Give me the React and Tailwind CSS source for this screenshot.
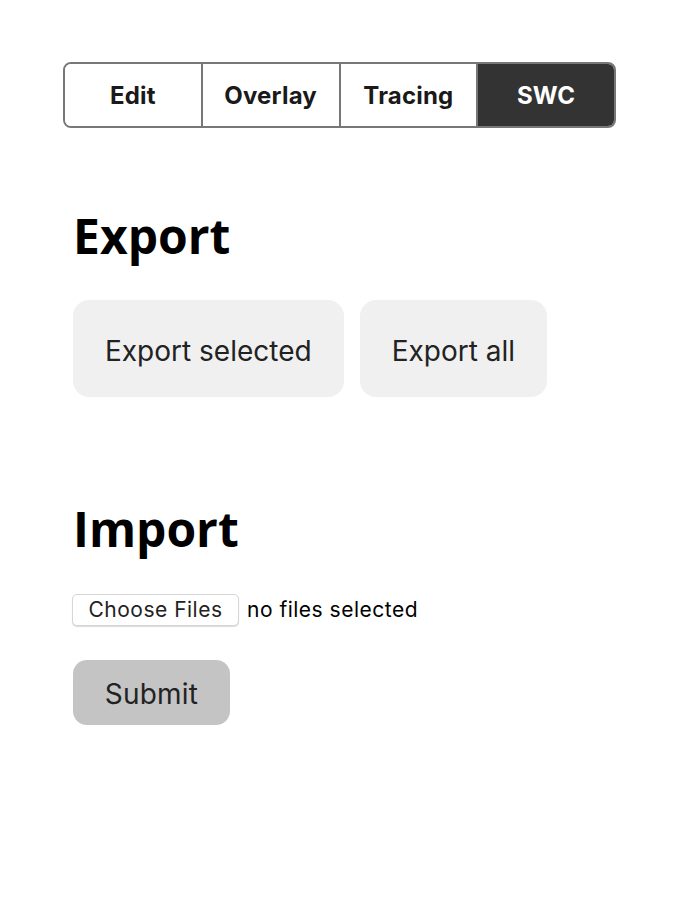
import React from 'react';

const tabs = ['Edit', 'Overlay', 'Tracing', 'SWC'];

export default function App() {
  const active = 'SWC';

  return (
    <div className="min-h-screen bg-white pt-[62px] pl-[63px]" style={{ fontFamily: 'Inter, "Noto Sans", sans-serif' }}>
      <div className="flex w-[553px] h-[66px] rounded-[8px] border-2 border-[#777777] overflow-hidden">
        {tabs.map((t, i) => (
          <div
            key={t}
            className={
              'flex-1 flex items-center justify-center pt-[2px] text-[24px] font-bold tracking-[0.2px] ' +
              (i > 0 ? 'border-l-2 border-[#777777] ' : '') +
              (t === active ? 'bg-[#333333] text-white border-[#222222]' : 'bg-white text-[#1a1a1a]')
            }
          >
            {t}
          </div>
        ))}
      </div>

      <div className="pl-[10px]">
        <h2
          className="mt-[84px] text-[48px] font-bold leading-none text-black"
          style={{ fontFamily: '"Open Sans", sans-serif' }}
        >
          Export
        </h2>
        <div className="mt-[40px] flex gap-[16px]">
          <button className="h-[97px] px-[32px] pt-[4px] rounded-[16px] bg-[#f0f0f0] text-[28px] text-[#222222]">
            Export selected
          </button>
          <button className="h-[97px] px-[32px] pt-[4px] rounded-[16px] bg-[#f0f0f0] text-[28px] text-[#222222]">
            Export all
          </button>
        </div>

        <h2
          className="mt-[108px] text-[48px] font-bold leading-none text-black"
          style={{ fontFamily: '"Open Sans", sans-serif' }}
        >
          Import
        </h2>
        <div className="mt-[41px] flex items-center gap-[8px] tracking-[0.5px]">
          <label className="h-[32px] w-[167px] -ml-[1px] flex items-center justify-center rounded-[5px] bg-white border border-[#d6d6d6] shadow-[0_1px_1px_rgba(0,0,0,0.15)] text-[21px] text-[#222222]">
            Choose Files
          </label>
          <span className="text-[21px] text-black">no files selected</span>
        </div>
        <button className="mt-[34px] h-[65px] w-[157px] pt-[2px] rounded-[14px] bg-[#c4c4c4] text-[28px] tracking-[0.2px] text-[#222222]">
          Submit
        </button>
      </div>
    </div>
  );
}
